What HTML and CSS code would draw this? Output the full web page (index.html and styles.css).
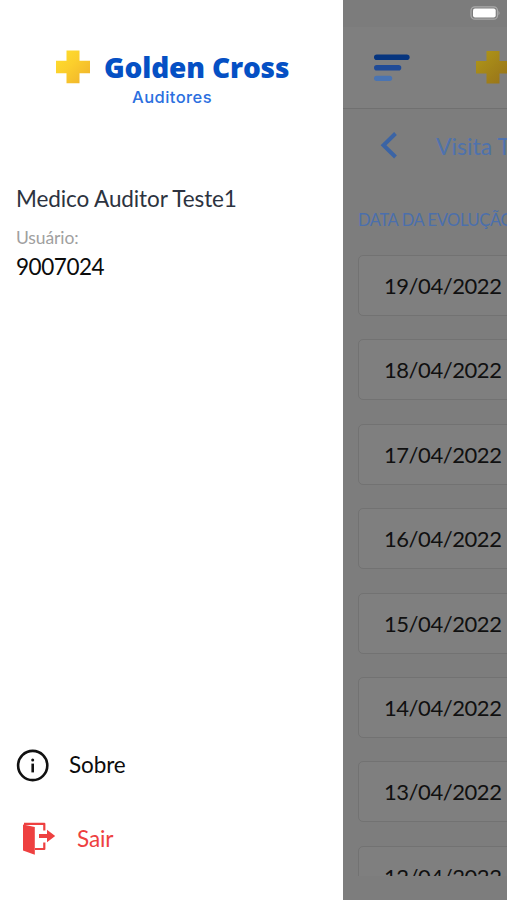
FILE: index.html
```html
<!DOCTYPE html>
<html lang="pt-BR">
<head>
    <meta charset="UTF-8">
    <meta name="viewport" content="width=device-width, initial-scale=1.0">
    <title>Golden Cross Auditores</title>
    <link rel="stylesheet" href="styles.css">
</head>
<body>
    <div class="app">
        <aside class="drawer">
            <div class="logo">
                <svg class="logo-cross" width="34" height="34" viewBox="0 0 34 34">
                    <defs>
                        <linearGradient id="gold" x1="0" y1="0" x2="1" y2="1">
                            <stop offset="0" stop-color="#ffe02e"/>
                            <stop offset="0.45" stop-color="#fbce2c"/>
                            <stop offset="1" stop-color="#efb02c"/>
                        </linearGradient>
                    </defs>
                    <path d="M10.500 0.500h13v10.200h10.500v12.500h-10.500v10h-13v-10h-10.500v-12.500h10.500z" fill="url(#gold)"/>
                </svg>
                <div class="logo-name">Golden Cross</div>
            </div>
            <div class="logo-sub">Auditores</div>
            <div class="user">
                <div class="user-name">Medico Auditor Teste1</div>
                <div class="user-label">Usuário:</div>
                <div class="user-code">9007024</div>
            </div>
            <nav class="menu">
                <a class="menu-item">
                    <svg width="34" height="34" viewBox="0 0 34 34">
                        <circle cx="16.700" cy="17.500" r="14.600" fill="none" stroke="#111" stroke-width="2.600"/>
                        <circle cx="16.700" cy="12" r="1.500" fill="#111"/>
                        <path d="M16.700 15.600v8.800" stroke="#111" stroke-width="2.600"/>
                    </svg>
                    <span>Sobre</span>
                </a>
                <a class="menu-item exit">
                    <svg width="34" height="34" viewBox="0 0 34 34">
                        <path d="M1 2.500L12.800 5v27.800L1 28.500z" fill="#ee4040"/>
                        <path d="M2 1.800h20.300v6.700M22.300 20.500v6.500H13" fill="none" stroke="#ee4040" stroke-width="2.200" stroke-linejoin="round"/>
                        <path d="M17 12h8V7.800l8.200 6.200-8.200 6.200V16h-8z" fill="#ee4040"/>
                    </svg>
                    <span>Sair</span>
                </a>
            </nav>
        </aside>
        <main class="page">
            <div class="status-bar">
                <svg width="31" height="14" viewBox="0 0 31 14">
                    <rect x="1" y="0.800" width="26.500" height="12.400" rx="3.800" fill="none" stroke="#aaa" stroke-width="1.300"/>
                    <rect x="3" y="2.500" width="22.700" height="9" rx="2" fill="#fff"/>
                    <path d="M28.500 4.700q2.200 2.300 0 4.600z" fill="#aaa"/>
                </svg>
            </div>
            <header class="top-bar">
                <svg width="36" height="28" viewBox="0 0 36 28">
                    <path d="M2.800 3.200h30" stroke="#06357f" stroke-width="5.600" stroke-linecap="round"/>
                    <path d="M2.800 13.800h21.700" stroke="#204b97" stroke-width="5.600" stroke-linecap="round"/>
                    <path d="M2.600 24.300h13" stroke="#4a74b2" stroke-width="5.200" stroke-linecap="round"/>
                </svg>
                <svg class="top-cross" width="34" height="34" viewBox="0 0 34 34">
                    <defs>
                        <linearGradient id="dim-gold" x1="0" y1="0" x2="1" y2="1">
                            <stop offset="0" stop-color="#b09818"/>
                            <stop offset="1" stop-color="#967019"/>
                        </linearGradient>
                    </defs>
                    <path d="M10.500 0h13v10h10.500v12.500h-10.500v10h-13v-10h-10.500v-12.500h10.500z" fill="url(#dim-gold)"/>
                </svg>
            </header>
            <div class="title-row">
                <svg width="18" height="28" viewBox="0 0 18 28">
                    <path d="M15.500 1.500L3.500 13.200l12 11.800" fill="none" stroke="#3b64a5" stroke-width="4"/>
                </svg>
                <span class="title">Visita Técnica</span>
            </div>
            <div class="section-label">DATA DA EVOLUÇÃO</div>
            <div class="date-list">
                <div class="date-card">19/04/2022</div>
                <div class="date-card">18/04/2022</div>
                <div class="date-card">17/04/2022</div>
                <div class="date-card">16/04/2022</div>
                <div class="date-card">15/04/2022</div>
                <div class="date-card">14/04/2022</div>
                <div class="date-card">13/04/2022</div>
                <div class="date-card">12/04/2022</div>
            </div>
        </main>
    </div>
</body>
</html>
```

FILE: styles.css
```css
* {
    box-sizing: border-box;
}

body {
    margin: 0;
    font-family: Lato, sans-serif;
    background-color: #fff;
}

.app {
    display: flex;
    width: 507px;
    height: 900px;
    overflow: hidden;
}

svg {
    display: block;
    flex-shrink: 0;
}

.drawer {
    display: flex;
    flex-direction: column;
    width: 343px;
    height: 900px;
    flex-shrink: 0;
    background-color: #fff;
}

.logo {
    display: flex;
    align-items: center;
    height: 34px;
    margin-top: 50px;
    padding-left: 56px;
}

.logo-name {
    margin-left: 14px;
    font-family: "Open Sans", sans-serif;
    font-size: 28px;
    font-weight: 800;
    line-height: 34px;
    letter-spacing: -0.15px;
    color: #0550c4;
    white-space: nowrap;
}

.logo-sub {
    margin-top: 3px;
    padding-left: 132px;
    font-family: Inter, sans-serif;
    font-size: 16.5px;
    font-weight: 500;
    line-height: 20px;
    letter-spacing: 0.45px;
    color: #2b6fe0;
}

.user {
    margin-top: 78px;
    padding-left: 16px;
}

.user-name {
    font-size: 22.5px;
    line-height: 28px;
    letter-spacing: -0.1px;
    color: #2c3340;
}

.user-label {
    margin-top: 15px;
    font-size: 17.5px;
    line-height: 20px;
    letter-spacing: -0.1px;
    color: #a0a0a0;
}

.user-code {
    margin-top: 5px;
    font-size: 22.5px;
    line-height: 28px;
    letter-spacing: -0.45px;
    color: #0c0c0c;
}

.menu {
    display: flex;
    flex-direction: column;
    gap: 40px;
    margin-top: auto;
    padding: 0 16px 44px;
}

.menu-item {
    display: flex;
    align-items: center;
    gap: 19px;
    height: 34px;
    font-size: 22.5px;
    line-height: 26px;
    letter-spacing: -0.1px;
    color: #0c0c0c;
}

.exit {
    gap: 21px;
    padding-left: 6px;
    color: #ee4040;
}

.page {
    display: flex;
    flex-direction: column;
    width: 164px;
    height: 900px;
    overflow: hidden;
    background-color: #7d7d7d;
}

.status-bar {
    height: 27px;
    padding: 6px 0 0 127px;
    background-color: #7c7c7c;
}

.top-bar {
    display: flex;
    align-items: center;
    gap: 66px;
    height: 82px;
    padding-left: 30.5px;
    border-bottom: 1px solid #707070;
    background-color: #7f7f7f;
}

.title-row {
    display: flex;
    align-items: center;
    gap: 38px;
    height: 74px;
    padding-left: 37px;
    white-space: nowrap;
}

.title {
    font-size: 23px;
    color: #4e72ad;
}

.section-label {
    height: 72px;
    padding: 26px 0 0 15px;
    font-size: 16.5px;
    line-height: 22px;
    letter-spacing: -0.4px;
    color: #4b6fac;
    white-space: nowrap;
}

.date-list {
    display: flex;
    flex-direction: column;
    gap: 23.4px;
    height: 621px;
    padding-left: 15px;
    overflow: hidden;
}

.date-card {
    width: 240px;
    height: 61px;
    flex-shrink: 0;
    padding-left: 25px;
    border: 1px solid #727272;
    border-radius: 5px;
    background-color: #7f7f7f;
    font-size: 22px;
    line-height: 60px;
    letter-spacing: -0.45px;
    color: #101010;
}
```
